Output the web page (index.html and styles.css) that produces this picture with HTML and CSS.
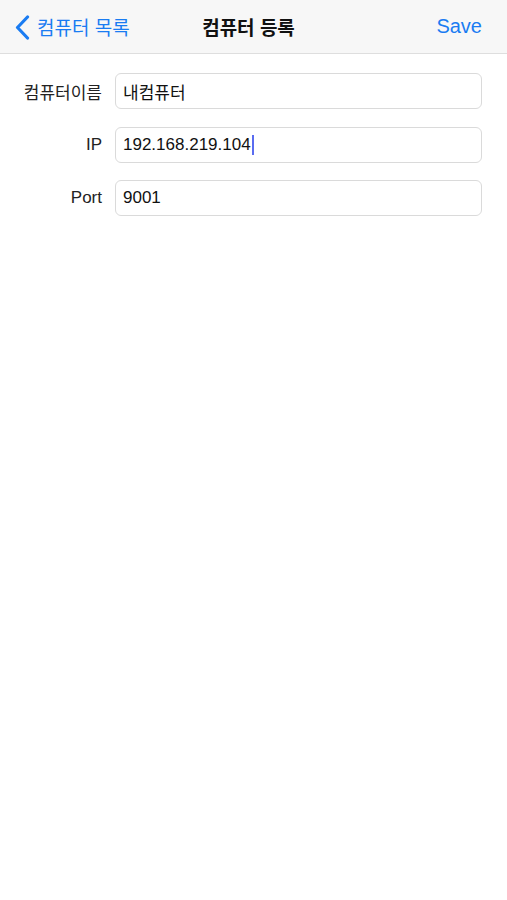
FILE: index.html
```html
<!DOCTYPE html>
<html lang="ko">
<head>
<meta charset="utf-8">
<link rel="stylesheet" href="styles.css">
</head>
<body>
<header class="navbar">
  <div class="nav-left">
    <svg class="chevron" width="15" height="25" viewBox="0 0 15 25"><path d="M12.5 2 L2.5 12.5 L12.5 23" fill="none" stroke="#1a7cf2" stroke-width="3.2" stroke-linecap="round" stroke-linejoin="round"/></svg>
    <span>컴퓨터 목록</span>
  </div>
  <div class="nav-title">컴퓨터 등록</div>
  <div class="nav-right">Save</div>
</header>
<main class="form">
  <div class="row">
    <label class="label">컴퓨터이름</label>
    <div class="field">내컴퓨터</div>
  </div>
  <div class="row">
    <label class="label">IP</label>
    <div class="field">192.168.219.104<span class="caret"></span></div>
  </div>
  <div class="row">
    <label class="label">Port</label>
    <div class="field">9001</div>
  </div>
</main>
</body>
</html>
```
FILE: styles.css
```css
html, body {
  margin: 0;
  padding: 0;
  background: #ffffff;
  font-family: "Liberation Sans", "Noto Sans CJK KR", sans-serif;
  color: #111;
}
.navbar {
  height: 53px;
  background: #f7f7f7;
  border-bottom: 1px solid #dedede;
  display: grid;
  grid-template-columns: 1fr auto 1fr;
  align-items: center;
  padding: 0 25px 0 15px;
  box-sizing: content-box;
}
.nav-left {
  display: flex;
  align-items: center;
  gap: 7px;
  color: #1a7cf2;
  font-size: 19px;
}
.chevron { display: block; margin-top: 1px; }
.nav-title {
  font-size: 19px;
  font-weight: bold;
  text-align: center;
  color: #111;
}
.nav-right {
  text-align: right;
  color: #1a7cf2;
  font-size: 20px;
}
.form {
  display: flex;
  flex-direction: column;
  gap: 17.5px;
  padding: 19px 25px 0 0;
}
.row {
  display: flex;
  align-items: center;
}
.label {
  width: 115px;
  flex: none;
  text-align: right;
  padding-right: 13px;
  box-sizing: border-box;
  font-size: 17px;
  color: #222;
}
.field {
  flex: 1;
  height: 36px;
  border: 1.5px solid #dadada;
  border-radius: 6px;
  box-sizing: border-box;
  padding: 0 7px;
  display: flex;
  align-items: center;
  font-size: 17px;
  color: #111;
}
.caret {
  display: inline-block;
  width: 2px;
  height: 20px;
  background: #5a6cf0;
  margin-left: 1px;
}
```
